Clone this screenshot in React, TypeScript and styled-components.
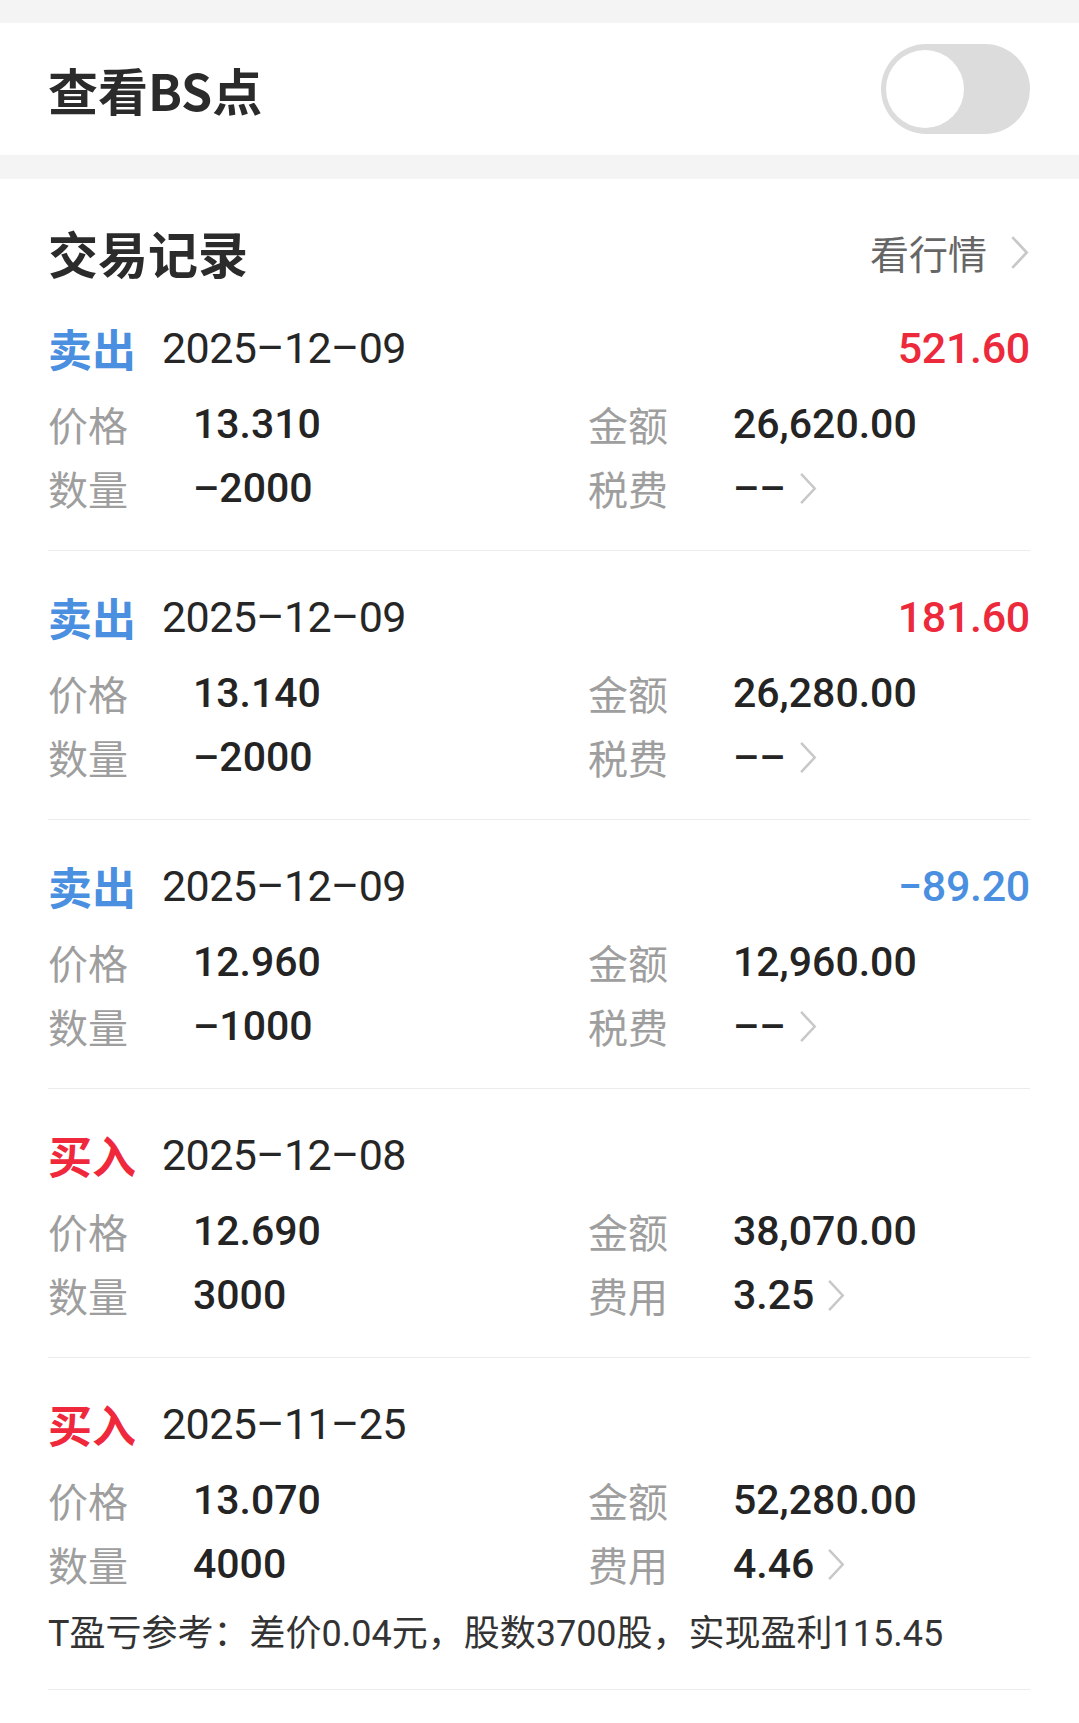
import styled, { createGlobalStyle } from "styled-components";

const GlobalStyle = createGlobalStyle`
  body {
    margin: 0;
    background: #ffffff;
    font-family: Roboto, "Noto Sans CJK SC", sans-serif;
    color: #222222;
  }
`;

const Page = styled.main`
  width: 1079px;
  background: #f4f4f4;
  padding-top: 23px;
`;

const ToggleBar = styled.section`
  height: 132px;
  background: #ffffff;
  display: flex;
  align-items: center;
  justify-content: space-between;
  padding: 0 49px 0 48px;
`;

const BarTitle = styled.h2`
  margin: 0;
  font-size: 50px;
  font-weight: 700;
  color: #2b2b2b;
  font-family: "Noto Sans CJK SC", sans-serif;
`;

const Switch = styled.div`
  width: 149px;
  height: 90px;
  border-radius: 45px;
  background: #dcdcdc;
  display: flex;
  align-items: center;
  padding-left: 5px;
  box-sizing: border-box;
`;

const Knob = styled.span`
  width: 78px;
  height: 78px;
  border-radius: 50%;
  background: #ffffff;
`;

const Card = styled.section`
  margin-top: 24px;
  background: #ffffff;
  padding: 0 49px 31px 48px;
`;

const CardHead = styled.div`
  display: flex;
  align-items: center;
  justify-content: space-between;
  padding-top: 43px;
  height: 60px;
`;

const CardTitle = styled.h2`
  margin: 0;
  font-size: 50px;
  font-weight: 700;
  color: #2b2b2b;
  font-family: "Noto Sans CJK SC", sans-serif;
`;

const MoreLink = styled.a`
  display: flex;
  align-items: center;
  gap: 22px;
  font-size: 39px;
  color: #666666;
  font-family: "Noto Sans CJK SC", sans-serif;
  text-decoration: none;
`;

const Trade = styled.article`
  padding: 36px 0 30px;
  border-bottom: 1px solid #ececec;
`;

const TradeHead = styled.div`
  height: 60px;
  display: flex;
  align-items: center;
`;

const Side = styled.span<{ $buy: boolean }>`
  font-size: 44px;
  font-weight: 700;
  font-family: "Noto Sans CJK SC", sans-serif;
  color: ${(p) => (p.$buy ? "#f0283c" : "#4a8fe0")};
  margin-right: 26px;
`;

const DateText = styled.span`
  font-size: 43px;
  color: #262626;
  letter-spacing: -0.6px;
`;

const Profit = styled.span<{ $loss: boolean }>`
  margin-left: auto;
  font-size: 43px;
  font-weight: 500;
  letter-spacing: -0.3px;
  color: ${(p) => (p.$loss ? "#4a8fe0" : "#ec2a3c")};
`;

const Stats = styled.div`
  margin-top: 14px;
  display: grid;
  grid-template-columns: 540px 1fr;
  grid-auto-rows: 64px;
`;

const Stat = styled.div`
  display: flex;
  align-items: center;
`;

const Label = styled.span`
  width: 145px;
  font-size: 40px;
  color: #9e9e9e;
  font-family: "Noto Sans CJK SC", sans-serif;
`;

const Value = styled.span`
  font-size: 41px;
  font-weight: 500;
  color: #242424;
  display: flex;
  align-items: center;
  gap: 12px;
`;

const Note = styled.p`
  margin: 13px 0 0;
  height: 50px;
  line-height: 50px;
  font-size: 36px;
  color: #333333;
`;

const Chevron = ({ h = 34 }: { h?: number }) => (
  <svg width={h * 0.6} height={h} viewBox="0 0 20 34" fill="none">
    <path d="M3 2 L17 17 L3 32" stroke="#c8c8c8" strokeWidth="2.6" />
  </svg>
);

type TradeRow = {
  buy: boolean;
  date: string;
  profit?: string;
  price: string;
  amount: string;
  qty: string;
  fee: string;
  note?: string;
};

const trades: TradeRow[] = [
  { buy: false, date: "2025-12-09", profit: "521.60", price: "13.310", amount: "26,620.00", qty: "-2000", fee: "--" },
  { buy: false, date: "2025-12-09", profit: "181.60", price: "13.140", amount: "26,280.00", qty: "-2000", fee: "--" },
  { buy: false, date: "2025-12-09", profit: "-89.20", price: "12.960", amount: "12,960.00", qty: "-1000", fee: "--" },
  { buy: true, date: "2025-12-08", price: "12.690", amount: "38,070.00", qty: "3000", fee: "3.25" },
  {
    buy: true,
    date: "2025-11-25",
    price: "13.070",
    amount: "52,280.00",
    qty: "4000",
    fee: "4.46",
    note: "T盈亏参考：差价0.04元，股数3700股，实现盈利115.45",
  },
];

const dash = (s: string) => s.replace(/-/g, "\u2013");

const App = () => {
  return (
    <>
      <GlobalStyle />
      <Page>
        <ToggleBar>
          <BarTitle>查看BS点</BarTitle>
          <Switch>
            <Knob />
          </Switch>
        </ToggleBar>
        <Card>
          <CardHead>
            <CardTitle>交易记录</CardTitle>
            <MoreLink href="#">
              看行情
              <Chevron h={35} />
            </MoreLink>
          </CardHead>
          {trades.map((t, i) => (
            <Trade key={i}>
              <TradeHead>
                <Side $buy={t.buy}>{t.buy ? "买入" : "卖出"}</Side>
                <DateText>{dash(t.date)}</DateText>
                {t.profit && <Profit $loss={t.profit.startsWith("-")}>{t.profit.replace("-", "\u2212")}</Profit>}
              </TradeHead>
              <Stats>
                <Stat>
                  <Label>价格</Label>
                  <Value>{t.price}</Value>
                </Stat>
                <Stat>
                  <Label>金额</Label>
                  <Value>{t.amount}</Value>
                </Stat>
                <Stat>
                  <Label>数量</Label>
                  <Value>{dash(t.qty)}</Value>
                </Stat>
                <Stat>
                  <Label>{t.buy ? "费用" : "税费"}</Label>
                  <Value>
                    {dash(t.fee)}
                    <Chevron h={33} />
                  </Value>
                </Stat>
              </Stats>
              {t.note && <Note>{t.note}</Note>}
            </Trade>
          ))}
        </Card>
      </Page>
    </>
  );
};

export default App;
